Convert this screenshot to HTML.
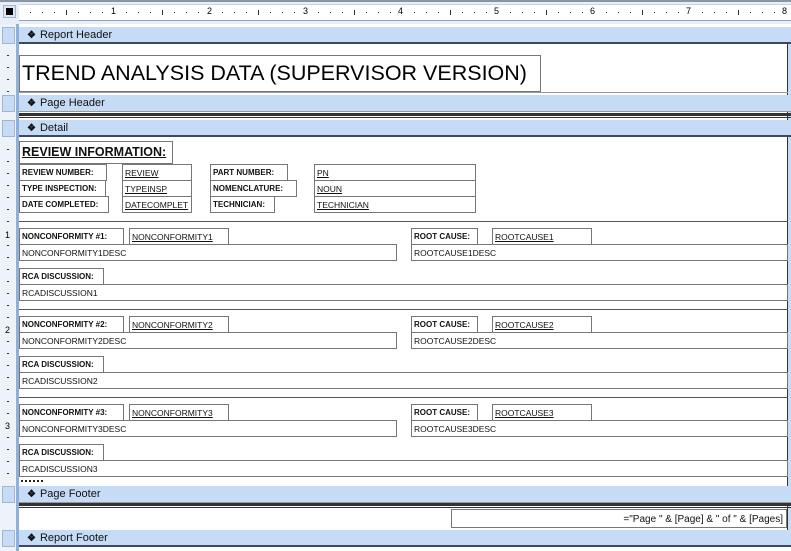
<!DOCTYPE html>
<html><head><meta charset="utf-8"><style>
*{margin:0;padding:0;box-sizing:border-box}
body{width:791px;height:551px;overflow:hidden;background:#fff;position:relative;font-family:"Liberation Sans",sans-serif;font-size:8.5px;color:#111}
div{position:absolute}
.bar{left:19px;width:772px;height:17px;background:#c6dbf5;border-bottom:2px solid #3b4a5c;font-size:11px;padding:2px 0 0 8px;color:#111}
.bar b{font-size:10px;margin-right:4px}
.lg{left:0;width:16px;background:#eef3fa}
.lb{left:2px;width:13px;background:#c6dbf5;border:1px solid #9fb5d0}
.b{border:1px solid #777;background:#fff;height:17px;padding:3px 0 0 2px;white-space:nowrap;overflow:hidden}
.lbl{font-weight:bold;font-size:8px}
.u{text-decoration:underline}
.hl{left:19px;width:769px;height:1px;background:#555}
.num{font-size:9px;color:#000}
</style></head><body>
<div style="left:0;top:0;width:791px;height:2px;background:#8a96a6"></div>
<div style="left:0;top:2px;width:791px;height:22px;background:#e8eef7"></div>
<div style="left:3px;top:5px;width:13px;height:13px;background:#dfe6f0;border:1px solid #9fb5d0"></div>
<div style="left:6px;top:8px;width:7px;height:7px;background:#000"></div>
<div style="left:19px;top:4px;width:772px;height:17px;background:#fff;border-top:1px solid #c8d4e4;border-bottom:1px solid #8fa3bd"></div>
<div style="left:19px;top:12px;width:772px;height:1px;background:repeating-linear-gradient(90deg,transparent 0 11px,#333 11px 12px)"></div>
<div style="left:19px;top:10px;width:772px;height:5px;background:repeating-linear-gradient(90deg,transparent 0 47px,#333 47px 48px,transparent 48px 96px)"></div>
<div class="num" style="left:110px;top:6px;background:#fff;padding:0 1px">1</div>
<div class="num" style="left:206px;top:6px;background:#fff;padding:0 1px">2</div>
<div class="num" style="left:302px;top:6px;background:#fff;padding:0 1px">3</div>
<div class="num" style="left:397px;top:6px;background:#fff;padding:0 1px">4</div>
<div class="num" style="left:493px;top:6px;background:#fff;padding:0 1px">5</div>
<div class="num" style="left:589px;top:6px;background:#fff;padding:0 1px">6</div>
<div class="num" style="left:685px;top:6px;background:#fff;padding:0 1px">7</div>
<div class="num" style="left:781px;top:6px;background:#fff;padding:0 1px">8</div>
<div class="lg" style="top:24px;height:527px"></div>
<div style="left:16px;top:24px;width:3px;height:527px;background:#8fb0d8"></div>
<div class="lb" style="top:27px;height:17px"></div>
<div class="lb" style="top:95px;height:17px"></div>
<div class="lb" style="top:120px;height:17px"></div>
<div class="lb" style="top:486px;height:17px"></div>
<div class="lb" style="top:530px;height:17px"></div>
<div style="left:7px;top:44px;width:2px;height:50px;background:repeating-linear-gradient(180deg,transparent 0 11px,#333 11px 12px)"></div>
<div style="left:7px;top:138px;width:2px;height:346px;background:repeating-linear-gradient(180deg,transparent 0 11px,#333 11px 12px)"></div>
<div class="num" style="left:5px;top:230px;background:#eef3fa">1</div>
<div class="num" style="left:5px;top:325px;background:#eef3fa">2</div>
<div class="num" style="left:5px;top:421px;background:#eef3fa">3</div>
<div style="left:787px;top:44px;width:1px;height:486px;background:#333"></div>
<div style="left:788px;top:44px;width:3px;height:486px;background:#c6dbf5"></div>
<div class="bar" style="top:27px"><b>&#x2756;</b>Report Header</div>
<div class="bar" style="top:95px;border-bottom:1px solid #999"><b>&#x2756;</b>Page Header</div>
<div style="left:19px;top:113px;width:772px;height:5px;border-top:3px solid #333;border-bottom:1px solid #333"></div>
<div class="bar" style="top:120px"><b>&#x2756;</b>Detail</div>
<div class="bar" style="top:486px;border-bottom:1px solid #999"><b>&#x2756;</b>Page Footer</div>
<div style="left:19px;top:503px;width:772px;height:5px;border-top:3px solid #333;border-bottom:1px solid #333"></div>
<div class="bar" style="top:530px"><b>&#x2756;</b>Report Footer</div>
<div class="b" style="left:19px;top:55px;width:522px;height:37px;font-size:21.5px;padding:5px 0 0 2px;color:#000">TREND ANALYSIS DATA (SUPERVISOR VERSION)</div>
<div class="hl" style="top:92px;background:#999"></div>
<div class="b lbl u" style="left:19px;top:141px;width:154px;height:23px;font-size:12.5px;padding:3px 0 0 2px">REVIEW INFORMATION:</div>
<div class="b lbl" style="left:19px;top:164px;width:88px">REVIEW NUMBER:</div>
<div class="b lbl" style="left:19px;top:180px;width:87px">TYPE INSPECTION:</div>
<div class="b lbl" style="left:19px;top:196px;width:90px">DATE COMPLETED:</div>
<div class="b u" style="left:122px;top:164px;width:70px">REVIEW</div>
<div class="b u" style="left:122px;top:180px;width:70px">TYPEINSP</div>
<div class="b u" style="left:122px;top:196px;width:70px">DATECOMPLET</div>
<div class="b lbl" style="left:210px;top:164px;width:78px">PART NUMBER:</div>
<div class="b lbl" style="left:210px;top:180px;width:87px">NOMENCLATURE:</div>
<div class="b lbl" style="left:210px;top:196px;width:65px">TECHNICIAN:</div>
<div class="b u" style="left:314px;top:164px;width:162px">PN</div>
<div class="b u" style="left:314px;top:180px;width:162px">NOUN</div>
<div class="b u" style="left:314px;top:196px;width:162px">TECHNICIAN</div>

<div class="hl" style="top:221px"></div>
<div class="b lbl" style="left:19px;top:228px;width:105px">NONCONFORMITY #1:</div>
<div class="b u" style="left:129px;top:228px;width:100px">NONCONFORMITY1</div>
<div class="b lbl" style="left:411px;top:228px;width:67px">ROOT CAUSE:</div>
<div class="b u" style="left:492px;top:228px;width:100px">ROOTCAUSE1</div>
<div class="b" style="left:19px;top:244px;width:378px">NONCONFORMITY1DESC</div>
<div class="b" style="left:411px;top:244px;width:377px">ROOTCAUSE1DESC</div>
<div class="b lbl" style="left:19px;top:268px;width:85px">RCA DISCUSSION:</div>
<div class="b" style="left:19px;top:284px;width:769px">RCADISCUSSION1</div>

<div class="hl" style="top:309px"></div>
<div class="b lbl" style="left:19px;top:316px;width:105px">NONCONFORMITY #2:</div>
<div class="b u" style="left:129px;top:316px;width:100px">NONCONFORMITY2</div>
<div class="b lbl" style="left:411px;top:316px;width:67px">ROOT CAUSE:</div>
<div class="b u" style="left:492px;top:316px;width:100px">ROOTCAUSE2</div>
<div class="b" style="left:19px;top:332px;width:378px">NONCONFORMITY2DESC</div>
<div class="b" style="left:411px;top:332px;width:377px">ROOTCAUSE2DESC</div>
<div class="b lbl" style="left:19px;top:356px;width:85px">RCA DISCUSSION:</div>
<div class="b" style="left:19px;top:372px;width:769px">RCADISCUSSION2</div>

<div class="hl" style="top:397px"></div>
<div class="b lbl" style="left:19px;top:404px;width:105px">NONCONFORMITY #3:</div>
<div class="b u" style="left:129px;top:404px;width:100px">NONCONFORMITY3</div>
<div class="b lbl" style="left:411px;top:404px;width:67px">ROOT CAUSE:</div>
<div class="b u" style="left:492px;top:404px;width:100px">ROOTCAUSE3</div>
<div class="b" style="left:19px;top:420px;width:378px">NONCONFORMITY3DESC</div>
<div class="b" style="left:411px;top:420px;width:377px">ROOTCAUSE3DESC</div>
<div class="b lbl" style="left:19px;top:444px;width:85px">RCA DISCUSSION:</div>
<div class="b" style="left:19px;top:460px;width:769px">RCADISCUSSION3</div>
<div style="left:21px;top:480px;width:23px;height:2px;background:repeating-linear-gradient(90deg,#222 0 2px,transparent 2px 4px)"></div>
<div class="b" style="left:451px;top:509px;width:336px;height:19px;text-align:right;padding:4px 3px 0 0;font-size:10px">="Page " &amp; [Page] &amp; " of " &amp; [Pages]</div>
<div style="left:19px;top:547px;width:772px;height:4px;background:#fff"></div>
</body></html>
